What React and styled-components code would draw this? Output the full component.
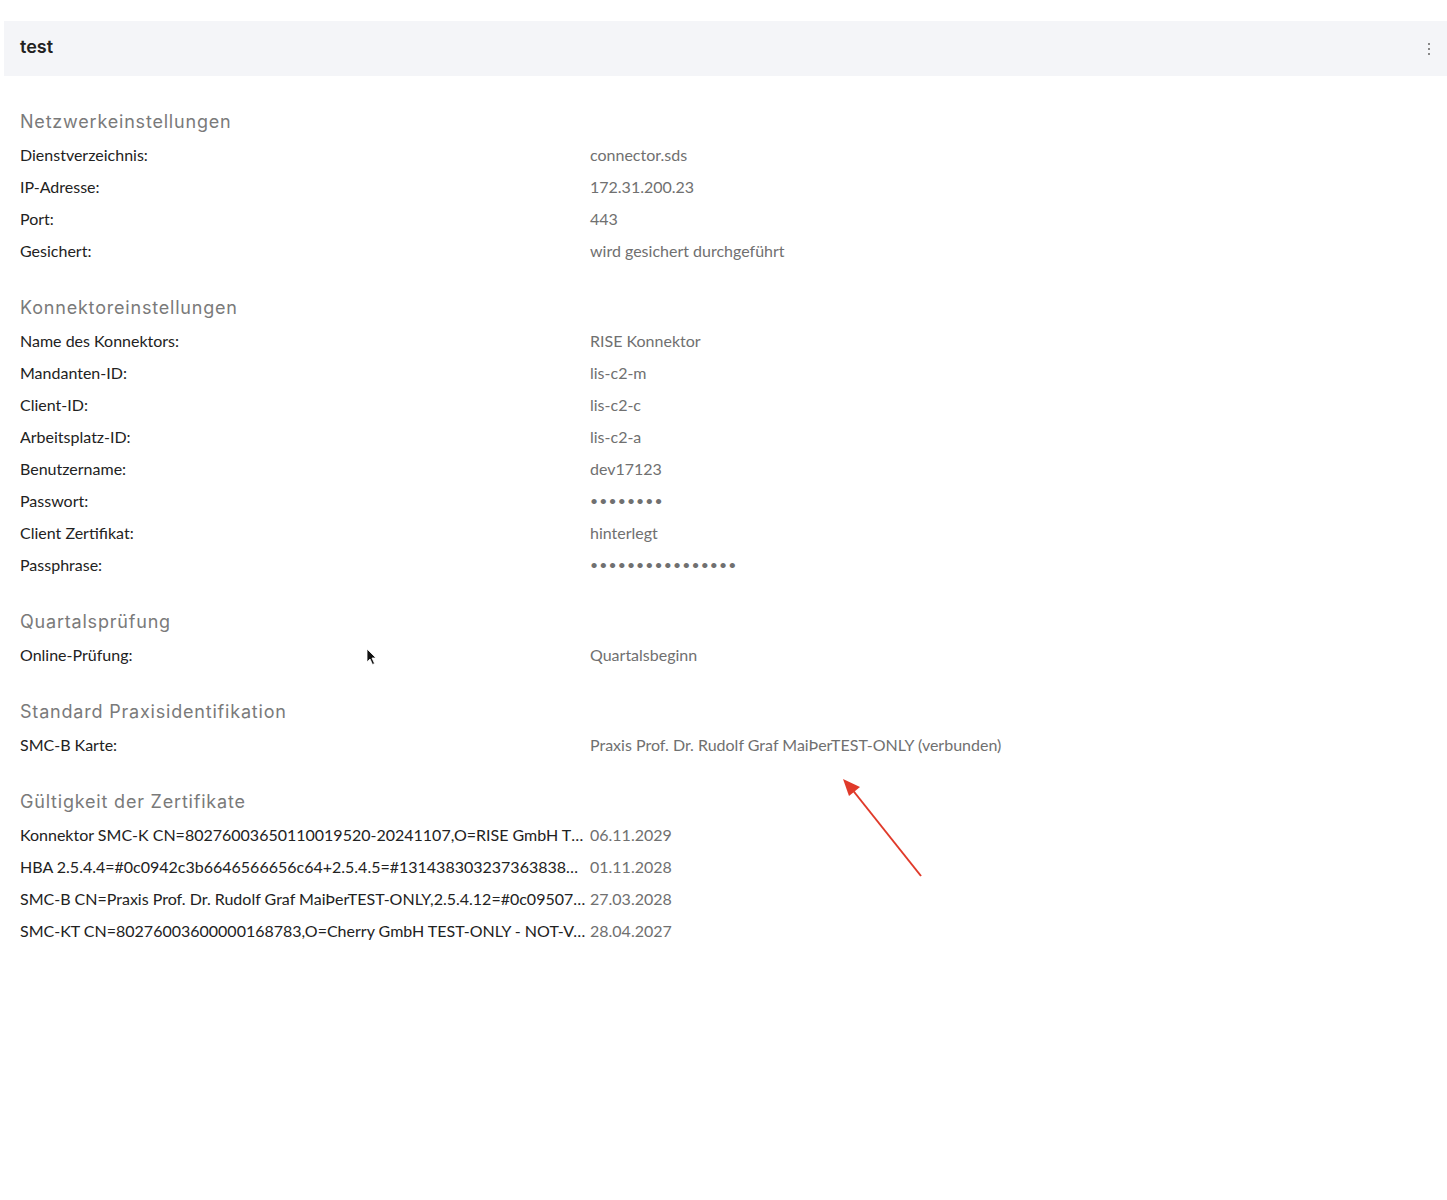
import React from 'react'
import styled, { createGlobalStyle } from 'styled-components'

const GlobalStyle = createGlobalStyle`
    body {
        margin: 0;
        background: #fff;
        font-family: Lato, "Liberation Sans", sans-serif;
    }
`

const sections = [
    {
        title: 'Netzwerkeinstellungen',
        rows: [
            ['Dienstverzeichnis:', 'connector.sds'],
            ['IP-Adresse:', '172.31.200.23'],
            ['Port:', '443'],
            ['Gesichert:', 'wird gesichert durchgeführt'],
        ],
    },
    {
        title: 'Konnektoreinstellungen',
        rows: [
            ['Name des Konnektors:', 'RISE Konnektor'],
            ['Mandanten-ID:', 'lis-c2-m'],
            ['Client-ID:', 'lis-c2-c'],
            ['Arbeitsplatz-ID:', 'lis-c2-a'],
            ['Benutzername:', 'dev17123'],
            ['Passwort:', '••••••••', true],
            ['Client Zertifikat:', 'hinterlegt'],
            ['Passphrase:', '••••••••••••••••', true],
        ],
    },
    {
        title: 'Quartalsprüfung',
        rows: [['Online-Prüfung:', 'Quartalsbeginn']],
    },
    {
        title: 'Standard Praxisidentifikation',
        rows: [['SMC-B Karte:', 'Praxis Prof. Dr. Rudolf Graf MaiÞerTEST-ONLY (verbunden)']],
    },
    {
        title: 'Gültigkeit der Zertifikate',
        rows: [
            ['Konnektor SMC-K CN=80276003650110019520-20241107,O=RISE GmbH TEST-ONLY - NOT-VALID,C=DE', '06.11.2029'],
            ['HBA 2.5.4.4=#0c0942c3b6646566656c64+2.5.4.5=#131438303237363838303030303030303030', '01.11.2028'],
            ['SMC-B CN=Praxis Prof. Dr. Rudolf Graf MaiÞerTEST-ONLY,2.5.4.12=#0c095072617869732054', '27.03.2028'],
            ['SMC-KT CN=80276003600000168783,O=Cherry GmbH TEST-ONLY - NOT-VALID,C=DE', '28.04.2027'],
        ],
    },
]

const App = () => {
    return (
        <>
            <GlobalStyle />
            <Page>
                <Card>
                    <Header>
                        <Title>test</Title>
                        <Kebab aria-label="Menü">
                            <span />
                            <span />
                            <span />
                        </Kebab>
                    </Header>
                    <Content>
                        {sections.map((s) => (
                            <Section key={s.title}>
                                <SectionTitle>{s.title}</SectionTitle>
                                {s.rows.map(([label, value, masked]) => (
                                    <Row key={label}>
                                        <Label>{label}</Label>
                                        <Value $masked={masked}>{value}</Value>
                                    </Row>
                                ))}
                            </Section>
                        ))}
                    </Content>
                </Card>
                <Cursor width="12" height="18" viewBox="0 0 12 18">
                    <path d="M1 1 L1 14 L4 11 L6.5 16.5 L8.5 15.5 L6 10 L10 10 Z" fill="#111" stroke="#fff" strokeWidth="0.8" />
                </Cursor>
                <Arrow width="90" height="110" viewBox="0 0 90 110">
                    <line x1="80" y1="100" x2="10" y2="12" stroke="#e03a2a" strokeWidth="2" />
                    <polygon points="2,3 19,11 8,20" fill="#e03a2a" />
                </Arrow>
            </Page>
        </>
    )
}

const Page = styled.div`
    position: relative;
    padding: 21px 0 0 4px;
    min-height: 1179px;
`

const Card = styled.div`
    width: 1443px;
`

const Header = styled.div`
    height: 55px;
    background: #f4f5f8;
    display: flex;
    align-items: center;
    justify-content: space-between;
    padding: 0 17px 0 16px;
    box-sizing: border-box;
`

const Title = styled.h1`
    margin: 0;
    font-family: Inter, "Open Sans", sans-serif;
    font-weight: 600;
    font-size: 18px;
    color: #222;
    position: relative;
    top: -2px;
`

const Kebab = styled.button`
    border: 0;
    background: none;
    padding: 0;
    display: flex;
    flex-direction: column;
    gap: 3px;
    span {
        width: 2px;
        height: 2px;
        background: #888;
        display: block;
    }
`

const Content = styled.div`
    padding: 6px 16px 0;
`

const Section = styled.section`
    padding-top: 26px;

    & + & {
        padding-top: 28px;
    }
`

const SectionTitle = styled.h2`
    margin: 0 0 2px;
    font-family: Inter, "Open Sans", sans-serif;
    font-weight: 400;
    font-size: 18px;
    letter-spacing: 0.8px;
    line-height: 28px;
    color: #7a7a7a;
`

const Row = styled.div`
    display: grid;
    grid-template-columns: 570px 1fr;
    height: 32px;
    align-items: center;
    font-size: 16px;
`

const Label = styled.div`
    color: #222;
    white-space: nowrap;
    overflow: hidden;
    text-overflow: ellipsis;
    padding-right: 3px;
`

const Value = styled.div`
    color: #707070;
    white-space: nowrap;
    letter-spacing: ${(p) => (p.$masked ? '1.1px' : '0')};
    font-size: ${(p) => (p.$masked ? '14px' : '16px')};
`

const Cursor = styled.svg`
    position: absolute;
    left: 366px;
    top: 648px;
`

const Arrow = styled.svg`
    position: absolute;
    left: 841px;
    top: 776px;
`

export default App
